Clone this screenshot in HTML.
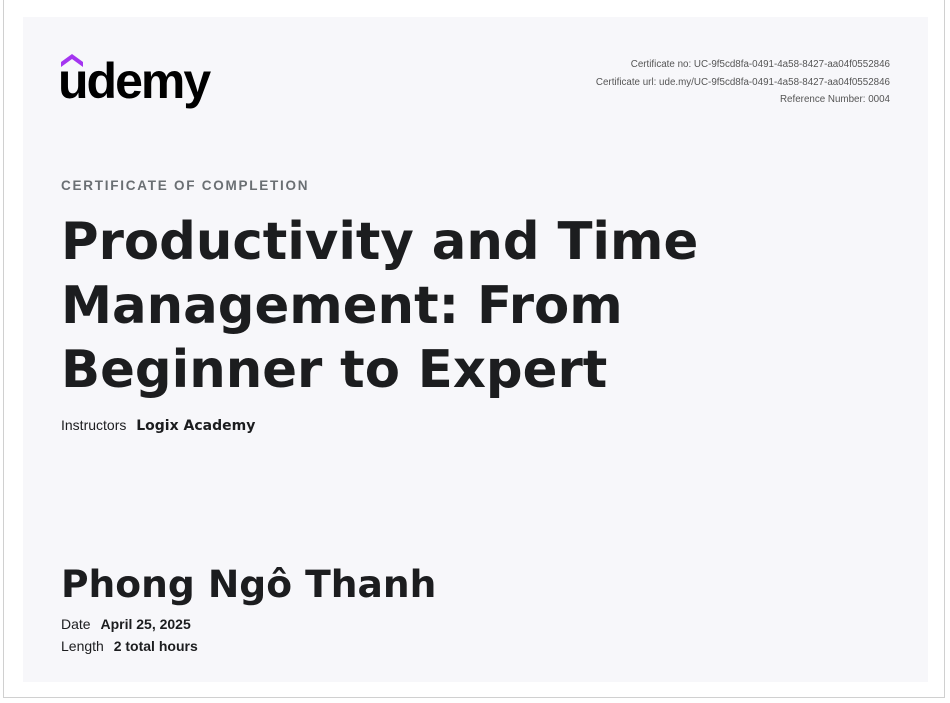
<!DOCTYPE html>
<html><head><meta charset="utf-8"><style>
body{margin:0;width:950px;height:703px;background:#fff;position:relative;overflow:hidden;font-family:"Liberation Sans",sans-serif}
.frame{position:absolute;left:3px;top:-2px;width:942px;height:700px;border:1px solid #d0d0d0;box-sizing:border-box}
.panel{position:absolute;left:23px;top:17px;width:905px;height:665px;background:#f7f7fa}
.abs{position:absolute}
.meta{right:60px;top:56px;text-align:right;font-size:9.8px;color:#555;line-height:17.5px}
.cert{left:61px;top:178px;font-size:13.5px;font-weight:bold;letter-spacing:1.75px;color:#6a6f73}
.title{left:61px;top:210px;font-family:"DejaVu Sans",sans-serif;font-weight:bold;font-size:51.3px;line-height:64px;color:#1c1d1f}
.instr{left:61px;top:417px;font-size:14px;color:#1c1d1f}
.instr b{font-family:"DejaVu Sans",sans-serif;margin-left:6px;font-size:14px}
.name{left:61px;top:562px;font-family:"DejaVu Sans",sans-serif;font-weight:bold;font-size:37.6px;color:#1c1d1f}
.info{left:61px;font-size:14px;color:#1c1d1f}
.info b{margin-left:6px}
</style></head><body>
<div class="frame"></div>
<div class="panel"></div>
<svg class="abs" style="left:60px;top:54px" width="24" height="16" viewBox="0 0 24 16"><path d="M1 13 L12 5 L23 13 L23 8 L12 0 L1 8 Z" fill="#a435f0"/></svg>
<div class="abs" style="left:58px;top:52px;font-size:50px;font-weight:bold;letter-spacing:-2px;color:#000">udemy</div>
<div class="abs meta">Certificate no: UC-9f5cd8fa-0491-4a58-8427-aa04f0552846<br>Certificate url: ude.my/UC-9f5cd8fa-0491-4a58-8427-aa04f0552846<br>Reference Number: 0004</div>
<div class="abs cert">CERTIFICATE OF COMPLETION</div>
<div class="abs title">Productivity and Time<br>Management: From<br>Beginner to Expert</div>
<div class="abs instr">Instructors <b>Logix Academy</b></div>
<div class="abs name">Phong Ngô Thanh</div>
<div class="abs info" style="top:616px">Date <b>April 25, 2025</b></div>
<div class="abs info" style="top:638px">Length <b>2 total hours</b></div>
</body></html>
